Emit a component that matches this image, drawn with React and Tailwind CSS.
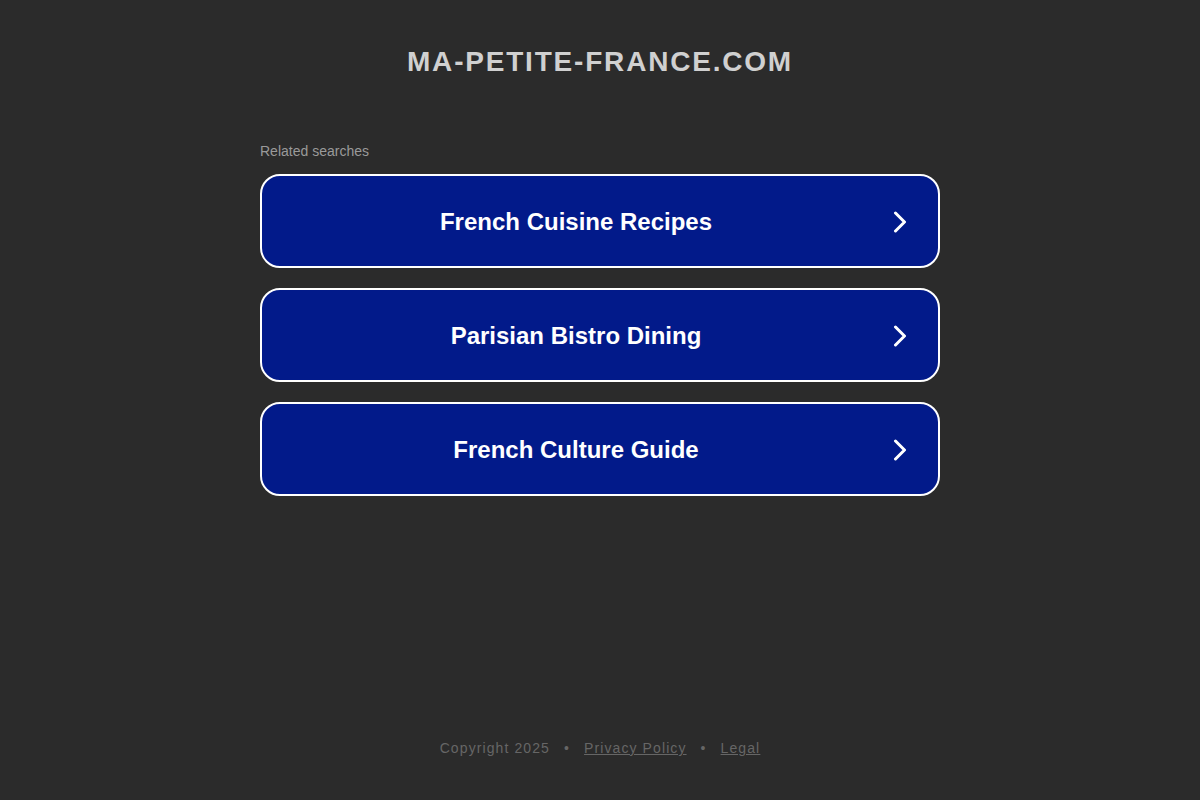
import React from "react";

const items = ["French Cuisine Recipes", "Parisian Bistro Dining", "French Culture Guide"];

function Chevron() {
  return (
    <svg width="14" height="22" viewBox="0 0 14 22" fill="none" stroke="white" strokeWidth="3" strokeLinecap="round" strokeLinejoin="round">
      <path d="M2.5 2 L11.5 11 L2.5 20" />
    </svg>
  );
}

export default function App() {
  return (
    <div className="h-[800px] bg-[#2b2b2b] flex flex-col items-center" style={{ fontFamily: '"Liberation Sans", Arial, sans-serif' }}>
      <h1 className="mt-[44px] text-[28px] leading-[36px] font-bold tracking-[1.8px] text-[#d0d0d0]">MA-PETITE-FRANCE.COM</h1>
      <div className="w-[680px] mt-[63px]">
        <div className="text-[14px] leading-[16px] text-[#9a9a9a]">Related searches</div>
        <div className="mt-[15px] flex flex-col gap-[20px]">
          {items.map((t) => (
            <div key={t} className="h-[94px] rounded-[20px] border-2 border-white bg-[#021a8a] flex items-center relative">
              <div className="flex-1 text-center text-[24px] leading-[28px] font-bold text-white pt-[2px] pr-[48px]">{t}</div>
              <div className="absolute right-[31px] top-[35px] flex"><Chevron /></div>
            </div>
          ))}
        </div>
      </div>
      <div className="mt-auto mb-[44px] text-[14px] leading-[16px] tracking-[1.1px] text-[#666] flex gap-[14px]">
        <span>Copyright 2025</span>
        <span>•</span>
        <span className="underline">Privacy Policy</span>
        <span>•</span>
        <span className="underline">Legal</span>
      </div>
    </div>
  );
}
